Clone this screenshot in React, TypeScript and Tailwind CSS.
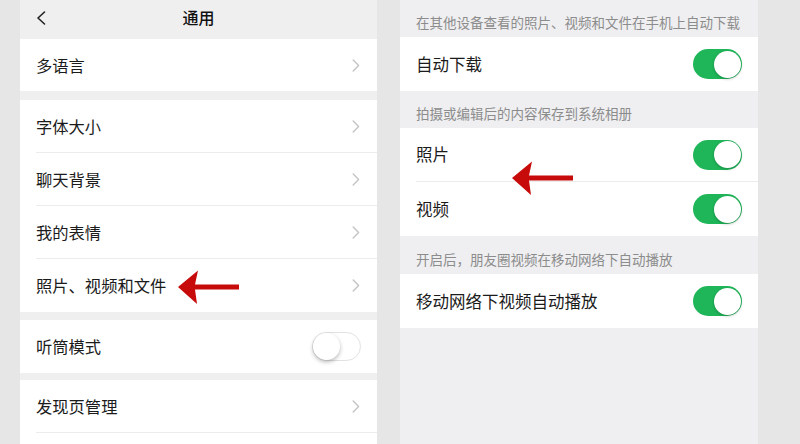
import React from 'react';

const Chevron = () => (
  <svg width="8" height="13" viewBox="0 0 8 13" fill="none">
    <path d="M1.2 1 L6.6 6.5 L1.2 12" stroke="#c4c4c6" strokeWidth="1.4" strokeLinecap="round" strokeLinejoin="round" />
  </svg>
);

const Toggle = ({ on }: { on: boolean }) =>
  on ? (
    <div className="w-[49px] h-[30px] rounded-full bg-[#1fb659] flex items-center justify-end p-[1.5px]">
      <div className="w-[27px] h-[27px] rounded-full bg-white shadow-[0_1px_3px_rgba(0,0,0,0.25)]" />
    </div>
  ) : (
    <div className="w-[49px] h-[29px] rounded-full bg-white border border-[#e2e2e2] flex items-center justify-start">
      <div className="w-[27px] h-[27px] rounded-full bg-white shadow-[0_2px_4px_rgba(0,0,0,0.28)]" />
    </div>
  );

const Arrow = () => (
  <svg width="64" height="36" viewBox="0 0 64 36">
    <polygon points="1,18 21,1.5 18,15.5 62,15.5 62,20.5 18,20.5 20,35" fill="#c70a0a" />
  </svg>
);

const NavRow = ({ label, divider, h = 'h-[53px]' }: { label: string; divider?: boolean; h?: string }) => (
  <div className={`${h} pl-[16px] bg-white`}>
    <div className={`h-full flex items-center justify-between pr-[17px] ${divider ? 'border-b border-[#ececec]' : ''}`}>
      <span className="text-[16.3px] text-[#1b1b1b]">{label}</span>
      <Chevron />
    </div>
  </div>
);

const SwitchRow = ({ label, on, divider }: { label: string; on: boolean; divider?: boolean }) => (
  <div className="h-[54px] pl-[16px] bg-white">
    <div className={`h-full flex items-center justify-between pr-[16px] ${divider ? 'border-b border-[#ececec]' : ''}`}>
      <span className="text-[16.5px] text-[#1b1b1b]">{label}</span>
      <Toggle on={on} />
    </div>
  </div>
);

const SectionTitle = ({ text, h }: { text: string; h: string }) => (
  <div className={`${h} pl-[16px] flex items-end pb-[7px]`}>
    <span className="text-[13.5px] leading-[16px] text-[#8c8c8c]">{text}</span>
  </div>
);

export default function App() {
  return (
    <div className="relative w-[800px] h-[444px] overflow-hidden bg-[#e6e6e6] flex font-['Noto_Sans_CJK_SC','Noto_Sans',sans-serif]">
      {/* left phone */}
      <div className="ml-[20px] w-[357px] h-full bg-[#efefef] flex flex-col">
        <div className="h-[39px] relative flex items-center justify-center pb-[5px] shrink-0">
          <svg className="absolute left-[16px] top-[11px]" width="10" height="14" viewBox="0 0 10 14" fill="none">
            <path d="M8.5 1 L2 7 L8.5 13" stroke="#222" strokeWidth="1.6" strokeLinecap="round" strokeLinejoin="round" />
          </svg>
          <span className="text-[16px] font-medium text-[#111]">通用</span>
        </div>
        <NavRow label="多语言" h="h-[52px]" />
        <div className="h-[9px] shrink-0" />
        <NavRow label="字体大小" divider />
        <NavRow label="聊天背景" divider />
        <NavRow label="我的表情" divider />
        <NavRow label="照片、视频和文件" />
        <div className="h-[8px] shrink-0" />
        <div className="h-[53px] pl-[16px] bg-white flex items-center justify-between pr-[16px]">
          <span className="text-[16.3px] text-[#1b1b1b]">听筒模式</span>
          <Toggle on={false} />
        </div>
        <div className="h-[7px] shrink-0" />
        <NavRow label="发现页管理" divider />
        <div className="flex-1 bg-white" />
      </div>

      <div className="w-[23px] shrink-0" />

      {/* right phone */}
      <div className="w-[358px] h-full bg-[#efeff1] flex flex-col">
        <SectionTitle text="在其他设备查看的照片、视频和文件在手机上自动下载" h="h-[37px]" />
        <SwitchRow label="自动下载" on />
        <SectionTitle text="拍摄或编辑后的内容保存到系统相册" h="h-[37px]" />
        <SwitchRow label="照片" on divider />
        <SwitchRow label="视频" on />
        <SectionTitle text="开启后，朋友圈视频在移动网络下自动播放" h="h-[38px]" />
        <SwitchRow label="移动网络下视频自动播放" on />
      </div>

      {/* annotation arrows */}
      <div className="absolute left-[177px] top-[269px]">
        <Arrow />
      </div>
      <div className="absolute left-[511px] top-[160px]">
        <Arrow />
      </div>
    </div>
  );
}
